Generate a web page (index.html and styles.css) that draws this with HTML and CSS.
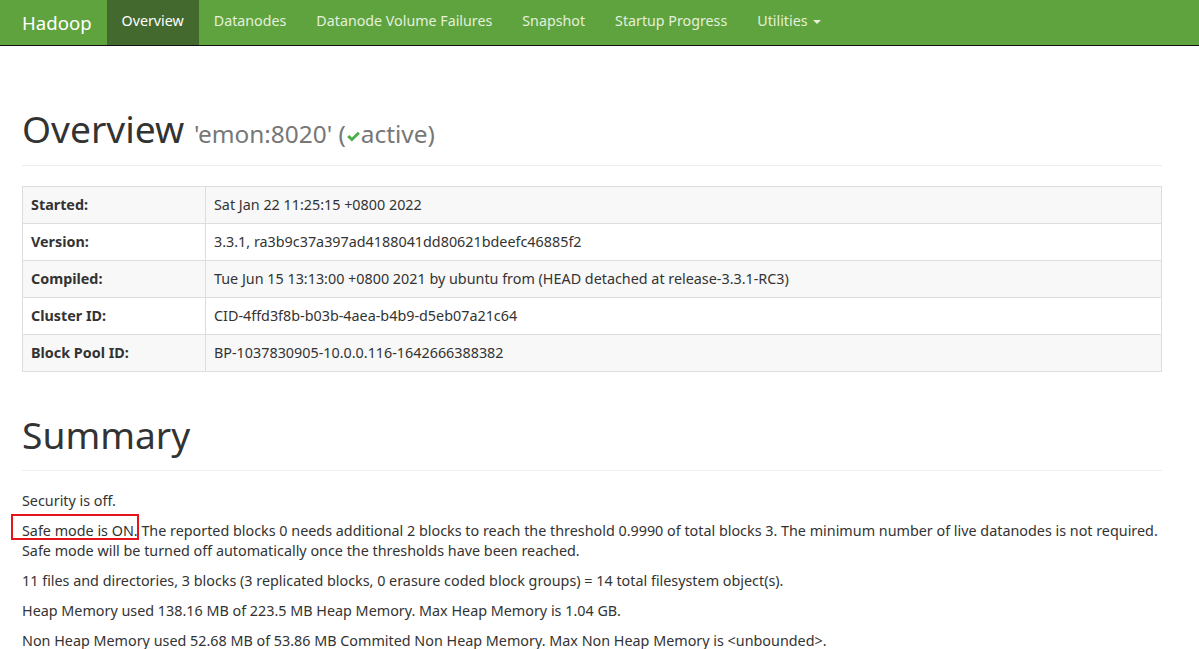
FILE: index.html
```html
<!DOCTYPE html>
<html>
<head>
<meta charset="utf-8">
<title>Namenode information</title>
<link rel="stylesheet" href="styles.css">
</head>
<body>
<nav class="navbar">
  <div class="nav-inner">
    <a class="brand">Hadoop</a>
    <ul class="nav">
      <li class="active"><a>Overview</a></li>
      <li><a>Datanodes</a></li>
      <li><a>Datanode Volume Failures</a></li>
      <li><a>Snapshot</a></li>
      <li><a>Startup Progress</a></li>
      <li><a>Utilities <span class="caret"></span></a></li>
    </ul>
  </div>
</nav>
<div class="container">
  <div class="page-header first">
    <h1>Overview <small>'emon:8020' (<svg class="ok" viewBox="0 0 16 16" width="15" height="15"><path d="M1.2 8.6 L3.6 6.4 L6.3 9 L12.6 2.8 L14.8 5 L6.3 13.4 Z" fill="#4cae4c"/></svg>active)</small></h1>
  </div>
  <table class="info">
    <tr><th>Started:</th><td>Sat Jan 22 11:25:15 +0800 2022</td></tr>
    <tr><th>Version:</th><td>3.3.1, ra3b9c37a397ad4188041dd80621bdeefc46885f2</td></tr>
    <tr><th>Compiled:</th><td>Tue Jun 15 13:13:00 +0800 2021 by ubuntu from (HEAD detached at release-3.3.1-RC3)</td></tr>
    <tr><th>Cluster ID:</th><td>CID-4ffd3f8b-b03b-4aea-b4b9-d5eb07a21c64</td></tr>
    <tr><th>Block Pool ID:</th><td>BP-1037830905-10.0.0.116-1642666388382</td></tr>
  </table>
  <div class="page-header second">
    <h1>Summary</h1>
  </div>
  <p>Security is off.</p>
  <p><span class="mark">Safe mode is ON.</span> The reported blocks 0 needs additional 2 blocks to reach the threshold 0.9990 of total blocks 3. The minimum number of live datanodes is not required.<br>Safe mode will be turned off automatically once the thresholds have been reached.</p>
  <p>11 files and directories, 3 blocks (3 replicated blocks, 0 erasure coded block groups) = 14 total filesystem object(s).</p>
  <p>Heap Memory used 138.16 MB of 223.5 MB Heap Memory. Max Heap Memory is 1.04 GB.</p>
  <p>Non Heap Memory used 52.68 MB of 53.86 MB Commited Non Heap Memory. Max Non Heap Memory is &lt;unbounded&gt;.</p>
</div>
</body>
</html>
```
FILE: styles.css
```css
* { box-sizing: border-box; }
html, body { margin: 0; padding: 0; }
body {
  font-family: "Noto Sans", "Open Sans", sans-serif;
  font-size: 14.35px;
  line-height: 20px;
  color: #333;
  background: #fff;
}
.navbar {
  background: #5fa33e;
  height: 46px;
  border-bottom: 1px solid #111;
}
.nav-inner {
  display: flex;
  align-items: stretch;
  height: 45px;
  padding-left: 7px;
}
.brand {
  display: block;
  padding: 12px 15px;
  font-size: 18.6px;
  line-height: 21px;
  color: #fff;
}
.nav {
  display: flex;
  list-style: none;
  margin: 0;
  padding: 0;
}
.nav li a {
  display: block;
  padding: 11px 15px 14px;
  line-height: 20px;
  color: #e4f0dc;
  font-size: 14.25px;
}
.nav li.active a {
  background: #44692f;
  color: #fff;
}
.caret {
  display: inline-block;
  width: 0;
  height: 0;
  margin-left: 2px;
  vertical-align: middle;
  border-top: 4px solid #e4f0dc;
  border-left: 4px solid transparent;
  border-right: 4px solid transparent;
}
.container {
  width: 1140px;
  margin-left: 22px;
}
.page-header {
  margin-top: 40px;
  padding-bottom: 9px;
  margin-bottom: 20px;
  border-bottom: 1px solid #eee;
}
.page-header h1 {
  margin: 20px 0 10px;
  font-size: 37.2px;
  font-weight: 400;
  line-height: 40px;
  color: #333;
}
.page-header.first { padding-bottom: 1px; }
.page-header.first h1 { margin-top: 63px; }
.page-header.second { padding-bottom: 5px; }
.page-header.second h1 { margin-top: 43px; }
.page-header h1 small {
  font-size: 24.4px;
  color: #777;
  font-weight: 400;
}
.ok { vertical-align: -1px; }
.info {
  width: 100%;
  border-collapse: collapse;
  border: 1px solid #ddd;
  margin-bottom: 20px;
}
.info th, .info td {
  border: 1px solid #ddd;
  padding: 8px;
  text-align: left;
  line-height: 20px;
  vertical-align: top;
}
.info th { width: 183px; font-weight: 700; }
.info tr:nth-child(odd) { background: #f8f8f8; }
p { margin: 0 0 10px; }
.mark { position: relative; }
.mark::before {
  content: "";
  position: absolute;
  left: -11px;
  right: -1px;
  top: -7px;
  bottom: 0;
  border: 2px solid #e8141b;
}
```
